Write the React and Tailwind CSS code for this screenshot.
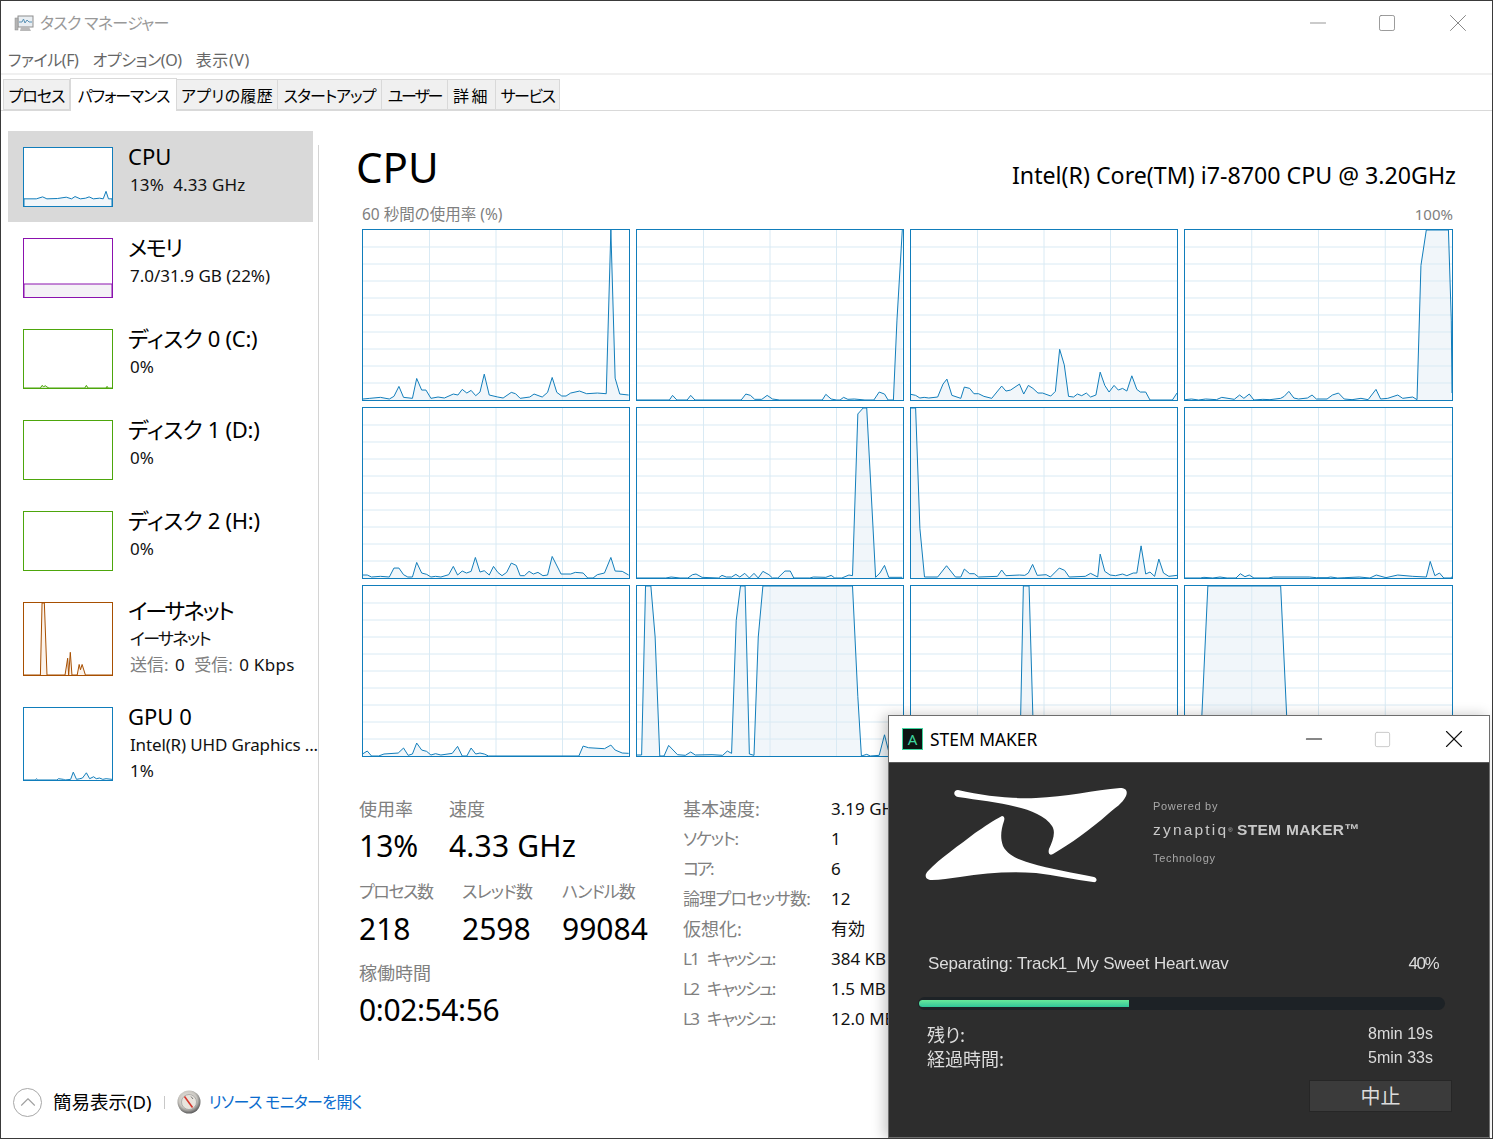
import { Minus, Square, X, ChevronUp } from "lucide-react";

const BLUE = "#117dbb";

// points are read off the graph in a 748x513 box, ox/oy is the corner of that box
const graphs = [
  { ox: 21, oy: 28, pts: "21,538 40,536 70,533 95,538 108,530 122,500 135,533 160,536 172,476 186,511 198,511 212,536 232,532 250,535 275,523 288,526 300,509 313,520 325,512 338,528 350,517 362,463 376,526 400,532 415,535 438,518 450,522 463,536 490,532 502,523 525,532 540,518 553,473 566,518 580,529 592,529 605,520 630,514 650,522 680,520 705,522 718,28 730,475 743,523 768,526" },
  { ox: 789, oy: 28, pts: "789,541 880,541 889,527 901,541 930,541 940,527 952,541 1082,541 1095,523 1108,527 1120,539 1140,539 1155,527 1170,538 1190,541 1310,541 1320,524 1335,538 1350,541 1360,541 1370,533 1382,539 1400,538 1430,541 1455,541 1470,517 1485,523 1495,541 1510,541 1520,300 1535,28" },
  { ox: 15, oy: 28, pts: "15,524 28,527 40,535 52,533 65,535 90,532 105,493 116,478 130,527 155,536 165,502 180,506 192,522 205,522 220,530 242,536 270,499 282,514 295,511 320,493 332,523 345,497 358,506 372,520 385,520 408,529 421,515 433,388 446,435 458,530 472,532 483,523 495,528 508,520 520,532 535,526 547,457 560,497 572,517 586,497 598,511 610,506 622,514 636,468 650,509 660,517 675,517 687,541 750,541 763,520" },
  { ox: 782, oy: 28, pts: "782,540 800,538 820,541 840,538 870,540 885,533 920,539 935,526 947,536 962,523 975,541 1000,539 1020,540 1050,536 1060,530 1073,515 1087,535 1100,538 1125,535 1138,526 1150,538 1180,538 1195,526 1212,520 1228,538 1250,540 1275,536 1295,540 1317,509 1330,538 1350,536 1378,526 1392,536 1420,532 1432,540 1443,135 1458,28 1520,28 1528,300 1530,520" },
  { ox: 21, oy: 22, pts: "21,526 33,526 45,532 70,530 95,532 108,505 122,505 135,525 147,532 160,532 172,488 186,520 200,524 212,532 225,530 240,532 262,525 275,500 287,526 300,514 312,520 325,515 337,473 350,517 362,513 376,526 388,500 400,518 412,528 425,518 438,490 452,497 463,528 475,528 488,515 500,523 513,518 527,528 540,526 553,470 578,523 605,523 618,518 640,520 653,535 668,535 680,525 700,520 718,473 730,514 750,515 768,526" },
  { ox: 789, oy: 22, pts: "789,535 870,535 885,532 910,535 932,535 945,525 955,523 972,533 1018,535 1028,527 1040,532 1055,532 1067,524 1078,532 1092,521 1105,535 1118,521 1130,535 1143,515 1160,525 1170,535 1185,535 1205,514 1220,514 1230,535 1275,535 1285,532 1320,533 1335,527 1345,535 1365,535 1385,526 1395,528 1410,40 1425,22 1435,22 1460,533 1472,520 1485,497 1497,533 1535,533" },
  { ox: 15, oy: 22, pts: "15,22 28,22 40,385 53,532 90,532 115,498 140,532 155,532 165,508 180,522 193,522 205,532 258,530 270,511 282,528 320,526 335,527 345,520 357,494 370,527 395,525 407,532 432,505 447,512 460,532 505,530 520,521 540,532 547,463 560,515 575,526 590,528 610,523 622,528 640,520 650,520 662,438 675,523 687,517 700,530 712,478 725,520 740,530 763,527" },
  { ox: 782, oy: 22, pts: "782,535 825,535 835,533 860,535 880,532 900,535 925,535 937,522 950,531 962,526 975,535 1015,535 1030,532 1130,532 1150,534 1180,534 1190,532 1210,535 1230,534 1270,532 1300,535 1318,526 1345,534 1378,526 1420,530 1458,532 1469,485 1482,528 1495,520 1507,535 1525,535 1530,532" },
  { ox: 21, oy: 16, pts: "21,522 33,514 45,529 65,529 80,523 120,520 135,505 148,527 160,523 172,490 186,511 200,515 212,526 225,522 240,526 272,521 287,500 300,529 313,529 325,505 338,523 350,520 362,523 374,529 628,529 640,499 655,504 700,507 718,496 730,511 750,520 768,521" },
  { ox: 789, oy: 16, pts: "789,526 802,526 813,16 828,16 840,170 853,529 865,529 878,497 903,525 925,527 940,517 953,526 1000,525 1030,527 1043,514 1055,521 1068,120 1080,16 1093,16 1105,523 1118,527 1130,170 1143,16 1395,16 1410,350 1420,529 1435,524 1445,529 1470,527 1485,465 1500,529 1535,529" },
  { ox: 0, oy: 0, pts: "0,513 306,513 316,0 332,0 346,513 748,513" },
  { ox: 0, oy: 0, pts: "0,513 42,513 64,0 268,0 290,513 748,513" },
];

const details = [
  ["基本速度:", "3.19 GHz", "text-[18px]"],
  ["ソケット:", "1", "tracking-[-1.2px]"],
  ["コア:", "6", "tracking-[-2.5px]"],
  ["論理プロセッサ数:", "12", "tracking-[-0.7px]"],
  ["仮想化:", "有効", "text-[18px]"],
  ["L1 キャッシュ:", "384 KB", "tracking-[-1.7px] [word-spacing:6px]"],
  ["L2 キャッシュ:", "1.5 MB", "tracking-[-1.7px] [word-spacing:6px]"],
  ["L3 キャッシュ:", "12.0 MB", "tracking-[-1.7px] [word-spacing:6px]"],
];

const tabs = [
  ["プロセス", "w-[67px] tracking-[-1px]"],
  ["パフォーマンス", "w-[107px] tracking-[-1.1px]"],
  ["アプリの履歴", "w-[101px] tracking-[0.3px]"],
  ["スタートアップ", "w-[104px] tracking-[-1px]"],
  ["ユーザー", "w-[66px] tracking-[-2.2px]"],
  ["詳細", "w-[48px] tracking-[2.5px]"],
  ["サービス", "w-[64px] tracking-[-1.5px]"],
];

function Graph({ ox, oy, pts }) {
  const first = pts.split(" ")[0].split(",")[0];
  const last = pts.split(" ").at(-1).split(",")[0];
  const base = oy + 513;
  return (
    <div className="h-[172px] border border-[#117dbb] bg-white">
      <svg viewBox={`${ox} ${oy} 748 513`} preserveAspectRatio="none" className="block h-full w-full">
        <polygon points={`${first},${base} ${pts} ${last},${base}`} fill="#f1f6fa" />
        {[1, 2, 3, 4, 5, 6, 7, 8, 9].map((i) => (
          <line key={i} x1={ox} x2={ox + 748} y1={oy + (i * 513) / 10} y2={oy + (i * 513) / 10} stroke="#d9eaf4" vectorEffect="non-scaling-stroke" />
        ))}
        {[1, 2, 3].map((i) => (
          <line key={i} x1={ox + (i * 748) / 4} x2={ox + (i * 748) / 4} y1={oy} y2={base} stroke="#d9eaf4" vectorEffect="non-scaling-stroke" />
        ))}
        <polyline points={pts} fill="none" stroke={BLUE} strokeWidth="1" vectorEffect="non-scaling-stroke" />
      </svg>
    </div>
  );
}

function Mini({ box, border, fill, pts, tall }) {
  return (
    <div className={`w-[90px] shrink-0 border bg-white ${tall ? "h-[74px]" : "h-[60px]"}`} style={{ borderColor: border }}>
      {pts && (
        <svg viewBox={box} preserveAspectRatio="none" className="block h-full w-full">
          <polygon points={pts} fill={fill} />
          <polyline points={pts} fill="none" stroke={border} strokeWidth="1" vectorEffect="non-scaling-stroke" />
        </svg>
      )}
    </div>
  );
}

function SideItem({ title, titleClass = "", sub, subClass = "", extra, selected, children, className }) {
  return (
    <div className={`ml-[7px] flex w-[305px] pl-[15px] pt-[16px] ${selected ? "bg-[#d9d9d9]" : ""} ${className}`}>
      {children}
      <div className="ml-[15px] min-w-0">
        <div className={`mt-[-6px] h-[30px] text-[22px] leading-[30px] text-black ${titleClass}`}>{title}</div>
        <div className={`ml-[2px] mt-[1px] w-[190px] whitespace-pre text-[17px] leading-[26px] text-[#111] ${subClass}`}>{sub}</div>
        {extra && <div className="ml-[2px] whitespace-nowrap text-[17px] leading-[26px] text-[#111]">{extra}</div>}
      </div>
    </div>
  );
}

function Stat({ label, labelClass = "text-[17px]", value, valueClass = "", className }) {
  return (
    <div className={className}>
      <div className={`leading-[24px] text-[#808080] ${labelClass}`}>{label}</div>
      <div className={`mt-[3px] whitespace-nowrap text-[30px] leading-[44px] text-black ${valueClass}`}>{value}</div>
    </div>
  );
}

function StemWindow() {
  return (
    <div className="absolute left-[887px] top-[714px] flex h-[423px] w-[602px] flex-col border border-[#6e6e6e] bg-white shadow-[-4px_0_12px_rgba(0,0,0,0.22)]">
      <div className="flex h-[47px] items-center border-b border-[#5a5a5a] pl-[13px] pr-[20px]">
        <div className="flex h-[22px] w-[21px] items-center justify-center border-[1.5px] border-[#3fd49f] bg-[#0d1412] text-[15px] leading-none text-[#3fd49f]">A</div>
        <span className="ml-[7px] text-[17.4px] text-black">STEM MAKER</span>
        <Minus className="ml-auto" size={26} strokeWidth={1} color="#111" />
        <Square className="ml-[46px]" size={19} strokeWidth={1.2} color="#c8c8c8" />
        <X className="ml-[47px]" size={30} strokeWidth={0.9} color="#111" />
      </div>
      <div className="flex flex-1 flex-col bg-[#2d2d2d] font-['Liberation_Sans',sans-serif]">
        <div className="flex h-[184px] items-start pl-[36px] pt-[24px]">
          <svg viewBox="925 787 202 96" className="h-[96px] w-[202px] shrink-0 blur-[0.4px]">
            <path fill="#fff" d="M958,790 C985,796 1010,799 1036,798 C1065,797 1095,790 1120,788 C1126,788 1128,791 1126,796 C1122,804 1116,807 1108,814 C1090,830 1070,844 1053,854 C1049,856 1048,853 1049,849 C1053,840 1056,832 1052,826 C1046,816 1030,810 1017,807 C998,802 978,800 958,797 C953,796 953,790 958,790 Z" />
            <path fill="#fff" d="M1002,816 C1004,816 1005,818 1004,821 C1001,830 1000,838 1003,846 C1008,856 1020,860 1030,863 C1050,869 1075,873 1094,877 C1098,878 1097,883 1093,882 C1075,880 1055,875 1036,873 C1010,871 985,873 960,877 C950,878 940,880 932,880 C925,880 924,875 928,871 C940,858 960,845 975,833 C984,827 994,820 1002,816 Z" />
          </svg>
          <div className="ml-[26px] blur-[0.3px]">
            <div className="mt-[11px] text-[11px] leading-[16px] tracking-[0.7px] text-[#a8a8a8]">Powered by</div>
            <div className="mt-[6px] whitespace-nowrap text-[15.5px] leading-[20px] text-[#c8c8c8]">
              <span className="tracking-[2.2px]">zynaptiq</span><sup className="text-[6px]">®</sup> <span className="font-bold tracking-[0.3px]">STEM MAKER™</span>
            </div>
            <div className="mt-[10px] text-[11px] leading-[16px] tracking-[0.7px] text-[#a8a8a8]">Technology</div>
          </div>
        </div>
        <div className="mt-[2px] flex h-[30px] items-center justify-between pl-[39px] pr-[51px] text-[17px] text-[#dcdcdc] blur-[0.3px]">
          <span className="tracking-[-0.2px]">Separating: Track1_My Sweet Heart.wav</span>
          <span className="tracking-[-1.5px]">40%</span>
        </div>
        <div className="ml-[29px] mt-[18px] flex h-[13px] w-[527px] items-center rounded-full bg-[#1d2226] px-[1px]">
          <div className="h-[7px] w-[210px] rounded-l-full bg-gradient-to-b from-[#66e89b] to-[#2fc59a]"></div>
        </div>
        <div className="mt-[12px] flex flex-col pl-[38px] pr-[56px] text-[16px] leading-[24px] text-[#dcdcdc] blur-[0.3px]">
          <div className="flex items-center justify-between"><span className="font-['Noto_Sans_CJK_JP',sans-serif] text-[18px]">残り:</span><span>8min 19s</span></div>
          <div className="flex items-center justify-between"><span className="font-['Noto_Sans_CJK_JP',sans-serif] text-[18px]">経過時間:</span><span>5min 33s</span></div>
        </div>
        <div className="mt-[10px] flex justify-end pr-[37px]">
          <button className="h-[32px] w-[143px] border border-[#262626] bg-[#3b3b3b] font-['Noto_Sans_CJK_JP',sans-serif] text-[20px] leading-none text-[#dcdcdc]">中止</button>
        </div>
      </div>
    </div>
  );
}

export default function App() {
  return (
    <div className="relative flex h-[1139px] w-[1493px] flex-col overflow-hidden border border-[#3a3a3a] bg-white font-['Noto_Sans','Noto_Sans_CJK_JP',sans-serif] [font-feature-settings:'palt']">
      {/* title bar */}
      <div className="flex h-[44px] items-center pl-[13px] pr-[19px]">
        <svg viewBox="0 0 20 20" className="h-[20px] w-[20px]">
          <rect x="4" y="3" width="15" height="11" fill="#e9eef2" stroke="#8d8d8d" />
          <path d="M5 9 L8 9 L9.5 6 L11 10 L13 7 L15 9 L18 9" fill="none" stroke="#5a92b5" />
          <rect x="1" y="5" width="3" height="12" fill="#b4b4b4" stroke="#8d8d8d" strokeWidth="0.5" />
          <path d="M7 14 L15 14 L17 18 L6 18 Z" fill="#b9b9b9" />
        </svg>
        <span className="ml-[6px] text-[16px] tracking-[-0.7px] text-[#999]">タスク マネージャー</span>
        <Minus className="ml-auto" size={26} strokeWidth={0.8} color="#888" />
        <Square className="ml-[46px]" size={20} strokeWidth={1} color="#888" />
        <X className="ml-[46px]" size={30} strokeWidth={0.8} color="#888" />
      </div>
      {/* menu */}
      <div className="mt-[1px] flex h-[28px] items-center gap-[14px] pl-[7px] text-[16px] text-[#666]">
        <span className="tracking-[-0.4px]">ファイル(F)</span>
        <span className="tracking-[-0.4px]">オプション(O)</span>
        <span className="tracking-[0.6px]">表示(V)</span>
      </div>
      <div className="mt-[-1px] h-[2px] bg-[#f0f0f0]"></div>
      {/* tabs */}
      <div className="flex h-[36px] items-start border-b border-[#d9d9d9] pl-[2px] pt-[4px]">
        {tabs.map(([name, w], i) =>
          i === 1 ? (
            <div key={name} className={`${w} z-10 mt-[-1px] flex h-[33px] items-center justify-center whitespace-nowrap border border-b-0 border-[#d9d9d9] bg-white pt-[1px] text-[16px] text-black`}>{name}</div>
          ) : (
            <div key={name} className={`${w} flex h-[31px] items-center justify-center whitespace-nowrap border-y border-r border-[#d9d9d9] bg-[#f0f0f0] pt-[2px] text-[16px] text-black first:border-l`}>{name}</div>
          )
        )}
      </div>

      <div className="flex flex-1">
        {/* side list */}
        <div className="w-[317px] shrink-0 pt-[20px]">
          <SideItem selected title="CPU" sub="13%  4.33 GHz" subClass="tracking-[0.15px]" className="h-[91px]">
            <Mini box="65 442 250 178" border={BLUE} fill="#f1f6fa" pts="65,620 65,598 100,598 118,592 130,598 160,597 185,593 200,598 210,591 225,598 240,596 250,592 262,598 280,596 290,598 298,575 305,598 315,598 315,620" />
          </SideItem>
          <SideItem title="メモリ" titleClass="tracking-[-1.5px]" sub="7.0/31.9 GB (22%)" className="h-[91px]">
            <Mini box="0 0 88 58" border="#8b12ae" fill="#f4f2f6" pts="0,58 0,45 88,45 88,58" />
          </SideItem>
          <SideItem title="ディスク 0 (C:)" titleClass="tracking-[-0.3px]" sub="0%" className="h-[91px]">
            <Mini box="70 328 268 178" border="#4da60c" fill="#d8ecc8" pts="70,506 120,506 125,498 130,502 135,499 140,503 146,506 255,506 260,498 265,506 320,506 323,501 326,506 338,506" />
          </SideItem>
          <SideItem title="ディスク 1 (D:)" titleClass="tracking-[-0.3px]" sub="0%" className="h-[91px]">
            <Mini border="#4da60c" />
          </SideItem>
          <SideItem title="ディスク 2 (H:)" titleClass="tracking-[-0.3px]" sub="0%" className="h-[91px]">
            <Mini border="#4da60c" />
          </SideItem>
          <SideItem
            title="イーサネット"
            titleClass="tracking-[-2px] mt-[-7px]"
            sub="イーサネット"
            subClass="tracking-[-1.7px]"
            extra={<><span className="text-[#808080]">送信:</span> <span className="ml-[2px]">0</span> <span className="ml-[5px] text-[#808080]">受信:</span> <span className="ml-[2px] tracking-[0.3px]">0 Kbps</span></>}
            className="h-[105px]"
          >
            <Mini tall box="70 307 268 219" border="#a74f01" fill="#fcf3eb" pts="70,526 120,526 125,307 132,307 140,526 195,526 203,475 206,526 211,457 216,526 232,526 238,494 242,510 247,494 257,526 338,526" />
          </SideItem>
          <SideItem title="GPU 0" sub="Intel(R) UHD Graphics ..." subClass="tracking-[-0.15px]" extra="1%" className="h-[105px]">
            <Mini tall box="70 622 268 220" border={BLUE} fill="#f1f6fa" pts="70,842 105,842 108,838 112,842 170,842 175,838 190,840 195,842 212,840 220,818 230,840 240,838 248,836 260,820 270,838 282,832 290,838 300,836 310,840 320,838 338,840" />
          </SideItem>
        </div>
        <div className="mt-[34px] h-[915px] w-px shrink-0 bg-[#d4d4d4]"></div>

        {/* cpu panel */}
        <div className="relative min-w-0 flex-1 pl-[37px] pr-[39px]">
          <div className="mt-[30px] flex h-[52px] items-center justify-between">
            <span className="text-[42px] leading-[52px] text-black">CPU</span>
            <span className="mr-[-3px] mt-[16px] whitespace-nowrap text-[23.2px] text-black">Intel(R) Core(TM) i7-8700 CPU @ 3.20GHz</span>
          </div>
          <div className="ml-[6px] mt-[11px] flex h-[20px] items-center justify-between text-[#808080]">
            <span className="mt-[1px] text-[15.5px]">60 秒間の使用率 (%)</span>
            <span className="text-[15px]">100%</span>
          </div>
          <div className="ml-[6px] mt-[5px] grid grid-cols-[268px_268px_268px_269px] gap-[6px]">
            {graphs.map((g, i) => (
              <Graph key={i} {...g} />
            ))}
          </div>
          <div className="ml-[3px] mt-[40px] flex">
            <div className="w-[324px] shrink-0">
              <div className="flex">
                <Stat className="w-[90px]" labelClass="text-[18px]" label="使用率" value="13%" />
                <Stat labelClass="text-[18px]" label="速度" value="4.33 GHz" valueClass="tracking-[0.2px]" />
              </div>
              <div className="mt-[12px] flex">
                <Stat className="w-[103px]" labelClass="text-[17px] tracking-[-1.4px]" label="プロセス数" value="218" />
                <Stat className="w-[100px]" labelClass="text-[17px] tracking-[-0.8px]" label="スレッド数" value="2598" />
                <Stat labelClass="text-[17px] tracking-[-1px]" label="ハンドル数" value="99084" />
              </div>
              <Stat className="mt-[10px]" labelClass="text-[18px]" label="稼働時間" value="0:02:54:56" valueClass="tracking-[-0.4px]" />
            </div>
            <div className="mt-[-3px] grid grid-cols-[148px_1fr] auto-rows-[30px] items-center whitespace-nowrap text-[17px] leading-[24px]">
              {details.map(([k, v, cls]) => (
                <div key={k} className="contents">
                  <span className={`text-[#808080] ${cls}`}>{k}</span>
                  <span className="text-[#111]">{v}</span>
                </div>
              ))}
            </div>
          </div>
        </div>
      </div>

      {/* footer */}
      <div className="flex h-[78px] items-center pl-[12px] pt-[6px]">
        <div className="flex h-[29px] w-[29px] items-center justify-center rounded-full border border-[#a8a8a8]">
          <ChevronUp size={26} strokeWidth={1} color="#a0a0a0" />
        </div>
        <span className="ml-[11px] text-[18.5px] text-black">簡易表示(D)</span>
        <div className="ml-[12px] h-[13px] w-px bg-[#c8c8c8]"></div>
        <svg viewBox="0 0 24 24" className="ml-[12px] h-[24px] w-[24px]">
          <defs>
            <radialGradient id="dial" cx="45%" cy="40%" r="60%">
              <stop offset="0%" stopColor="#f4f1ec" />
              <stop offset="65%" stopColor="#c9c6c0" />
              <stop offset="100%" stopColor="#5c5c5c" />
            </radialGradient>
          </defs>
          <circle cx="12" cy="12" r="11.5" fill="url(#dial)" />
          <circle cx="12" cy="12" r="7.5" fill="#e8e4dd" stroke="#9a9a9a" strokeWidth="0.7" />
          <path d="M7.5 6.5 L15.5 17.5" stroke="#d6342a" strokeWidth="1.6" />
          <path d="M14 6.5 L16 9" stroke="#7a7a7a" strokeWidth="1" />
        </svg>
        <span className="ml-[8px] text-[16px] tracking-[-0.65px] text-[#0a6cce]">リソース モニターを開く</span>
      </div>

      <StemWindow />
    </div>
  );
}
